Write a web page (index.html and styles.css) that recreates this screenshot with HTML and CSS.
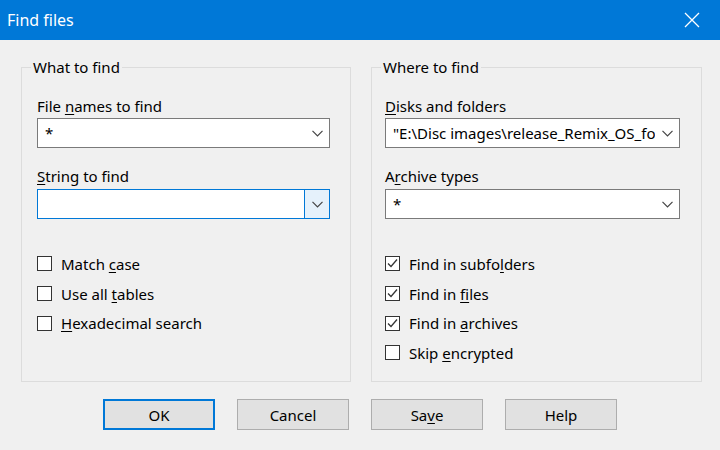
FILE: index.html
```html
<!DOCTYPE html>
<html lang="en">
<head>
    <meta charset="UTF-8">
    <title>Find files</title>
    <link rel="stylesheet" href="styles.css">
</head>
<body>

    <!-- Title bar -->
    <div class="titlebar">
        <span class="title">Find files</span>
        <svg class="close" width="16" height="16" viewBox="0 0 16 16">
            <path d="M1 1 L15 15 M15 1 L1 15" stroke="#fff" stroke-width="1.3" fill="none"/>
        </svg>
    </div>

    <div class="dialog">
        <div class="groups">

            <!-- What to find -->
            <fieldset class="group left">
                <legend>What to find</legend>

                <div class="label">File <u>n</u>ames to find</div>
                <div class="combo">
                    <span class="value">*</span>
                    <span class="arrow">
                        <svg width="11" height="7" viewBox="0 0 11 7"><polyline points="0.5,0.8 5.5,5.8 10.5,0.8" fill="none" stroke="#444" stroke-width="1.2"/></svg>
                    </span>
                </div>

                <div class="label"><u>S</u>tring to find</div>
                <div class="combo focused">
                    <span class="value"></span>
                    <span class="arrow button">
                        <svg width="11" height="7" viewBox="0 0 11 7"><polyline points="0.5,0.8 5.5,5.8 10.5,0.8" fill="none" stroke="#444" stroke-width="1.2"/></svg>
                    </span>
                </div>

                <div class="checks">
                    <div class="check"><span class="box"></span><span>Match <u>c</u>ase</span></div>
                    <div class="check"><span class="box"></span><span>Use all <u>t</u>ables</span></div>
                    <div class="check"><span class="box"></span><span><u>H</u>exadecimal search</span></div>
                </div>
            </fieldset>

            <!-- Where to find -->
            <fieldset class="group right">
                <legend>Where to find</legend>

                <div class="label"><u>D</u>isks and folders</div>
                <div class="combo">
                    <span class="value">"E:\Disc images\release_Remix_OS_for_PC_Android_M_64bit_B2016112101"</span>
                    <span class="arrow">
                        <svg width="11" height="7" viewBox="0 0 11 7"><polyline points="0.5,0.8 5.5,5.8 10.5,0.8" fill="none" stroke="#444" stroke-width="1.2"/></svg>
                    </span>
                </div>

                <div class="label">A<u>r</u>chive types</div>
                <div class="combo">
                    <span class="value">*</span>
                    <span class="arrow">
                        <svg width="11" height="7" viewBox="0 0 11 7"><polyline points="0.5,0.8 5.5,5.8 10.5,0.8" fill="none" stroke="#444" stroke-width="1.2"/></svg>
                    </span>
                </div>

                <div class="checks">
                    <div class="check"><span class="box"><svg width="13" height="13" viewBox="0 0 13 13"><polyline points="2,6.5 5,9.5 11,2.5" fill="none" stroke="#333" stroke-width="1.3"/></svg></span><span>Find in subfo<u>l</u>ders</span></div>
                    <div class="check"><span class="box"><svg width="13" height="13" viewBox="0 0 13 13"><polyline points="2,6.5 5,9.5 11,2.5" fill="none" stroke="#333" stroke-width="1.3"/></svg></span><span>Find in <u>f</u>iles</span></div>
                    <div class="check"><span class="box"><svg width="13" height="13" viewBox="0 0 13 13"><polyline points="2,6.5 5,9.5 11,2.5" fill="none" stroke="#333" stroke-width="1.3"/></svg></span><span>Find in <u>a</u>rchives</span></div>
                    <div class="check"><span class="box"></span><span>Skip <u>e</u>ncrypted</span></div>
                </div>
            </fieldset>
        </div>

        <!-- Buttons -->
        <div class="buttons">
            <button class="default">OK</button>
            <button>Cancel</button>
            <button>Sa<u>v</u>e</button>
            <button>Help</button>
        </div>
    </div>

</body>
</html>
```

FILE: styles.css
```css
body {
    font-family: "Noto Sans", "Open Sans", Arial, sans-serif;
    font-size: 15px;
    color: #000;
    background-color: #f0f0f0;
    margin: 0;
    padding: 0;
    width: 720px;
    height: 450px;
    overflow: hidden;
}
u {
    text-decoration-thickness: 1px;
    text-underline-offset: 2px;
}
.titlebar {
    background-color: #0078d7;
    height: 40px;
    display: flex;
    justify-content: space-between;
    align-items: center;
    padding: 0 20px 0 7px;
}
.title {
    color: white;
    font-size: 16px;
}
.dialog {
    padding: 17px 18px 0 21px;
}
.groups {
    display: flex;
    gap: 20px;
}
.group {
    margin: 0;
    min-width: 0;
    border: 1px solid #dcdcdc;
    padding: 12px 20px 12px 15px;
    height: 325px;
    box-sizing: border-box;
    flex: none;
}
.group.left {
    width: 330px;
}
.group.right {
    width: 331px;
    padding-right: 21px;
    padding-left: 13px;
}
legend {
    padding: 0 2px;
    margin-left: -6px;
    line-height: 20px;
}
.group.right legend {
    margin-left: -4px;
}
.label {
    line-height: 20px;
    margin-top: 18px;
    margin-bottom: 3px;
    white-space: nowrap;
}
.label:first-of-type {
    margin-top: 7px;
    margin-bottom: 2px;
}
.combo {
    height: 30px;
    box-sizing: border-box;
    background-color: white;
    border: 1px solid #7a7a7a;
    display: flex;
    align-items: center;
}
.combo.focused {
    border-color: #0078d7;
}
.value {
    flex: 1;
    min-width: 0;
    overflow: hidden;
    white-space: nowrap;
    padding-left: 7px;
}
.arrow {
    flex: none;
    width: 24px;
    height: 100%;
    display: flex;
    align-items: center;
    justify-content: center;
}
.arrow.button {
    background-color: #e5f1fb;
    border-left: 1px solid #0078d7;
}
.checks {
    margin-top: 30px;
}
.check {
    height: 29.7px;
    display: flex;
    align-items: center;
    white-space: nowrap;
}
.box {
    flex: none;
    width: 13px;
    height: 13px;
    border: 1px solid #333;
    background-color: white;
    margin-right: 9px;
    display: flex;
}
.buttons {
    display: flex;
    justify-content: center;
    gap: 22px;
    margin-top: 17px;
    padding-right: 3px;
}
button {
    font-family: inherit;
    font-size: 15px;
    width: 112px;
    height: 31px;
    background-color: #e1e1e1;
    border: 1px solid #adadad;
    padding: 0;
    color: #000;
}
button.default {
    border: 2px solid #0078d7;
}
```
